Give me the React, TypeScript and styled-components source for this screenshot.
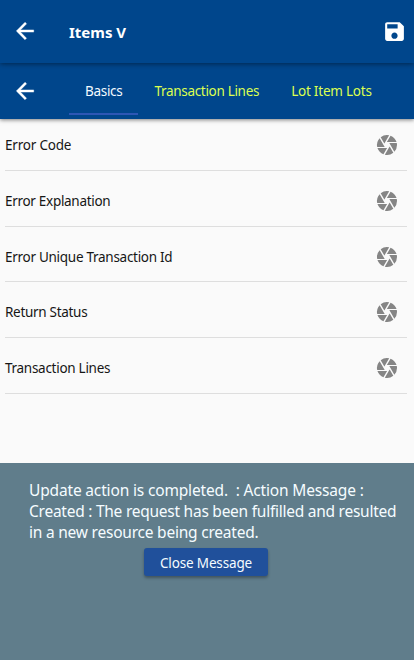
import React from 'react';
import styled, { createGlobalStyle } from 'styled-components';
import { IoMdArrowBack, IoMdSave } from 'react-icons/io';
import { MdCamera } from 'react-icons/md';

const GlobalStyle = createGlobalStyle`
  * { box-sizing: border-box; }
  body { margin: 0; background: #fafafa; font-family: "Noto Sans", sans-serif; }
`;

const Screen = styled.main`
  height: 660px;
  display: flex;
  flex-direction: column;
  overflow: hidden;
  background: #fafafa;
`;

const Header = styled.header`
  flex: none;
  height: 63px;
  display: flex;
  align-items: center;
  padding: 0 7px 1px 12px;
  background: #00468c;
  color: #fff;
  z-index: 2;
  box-shadow: 0 1px 5px rgba(0, 0, 0, 0.45);
`;

const IconButton = styled.button`
  display: flex;
  border: 0;
  padding: 0;
  background: none;
  color: inherit;
`;

const BackIcon = styled(IoMdArrowBack)`
  stroke: currentColor;
  stroke-width: 8px;
`;

const Title = styled.h1`
  flex: 1;
  margin: 2px 0 0 31px;
  font-size: 15px;
  font-weight: 700;
  line-height: 20px;
  letter-spacing: 0;
`;

const TabBar = styled.nav`
  flex: none;
  height: 56px;
  display: flex;
  align-items: center;
  padding-left: 12px;
  background: #00468c;
  color: #fff;
  z-index: 1;
  box-shadow: 0 1px 4px rgba(0, 0, 0, 0.5);
`;

const Tabs = styled.div`
  align-self: stretch;
  display: flex;
  margin-left: 31px;
`;

const Tab = styled.button<{ $active?: boolean; $spacing: number }>`
  height: 52px;
  border: 0;
  border-bottom: 2px solid ${(p) => (p.$active ? '#2d57b5' : 'transparent')};
  padding: 6px 16px 0;
  background: none;
  color: ${(p) => (p.$active ? '#f4faff' : '#dcff50')};
  font: 400 13.5px/20px "Noto Sans", sans-serif;
  letter-spacing: ${(p) => p.$spacing}px;
  white-space: nowrap;
`;

const Fields = styled.section`
  flex: 1;
  padding: 0 7px 0 5px;
`;

const FieldRow = styled.div`
  height: 55.7px;
  display: flex;
  align-items: center;
  justify-content: space-between;
  padding: 5px 8px 0 0;
  border-bottom: 1px solid #dedede;
  color: #858585;

  &:first-child { height: 52px; padding-top: 1px; }
`;

const FieldLabel = styled.span<{ $spacing: number }>`
  color: #161616;
  font-size: 13.5px;
  line-height: 20px;
  letter-spacing: ${(p) => p.$spacing}px;
`;

const MessagePanel = styled.section`
  flex: none;
  height: 197px;
  display: flex;
  flex-direction: column;
  align-items: center;
  padding-top: 17px;
  background: #607d8b;
  color: #f5fcff;
`;

const MessageText = styled.p`
  align-self: stretch;
  margin: 0 0 5px 29px;
  font-size: 15.5px;
  line-height: 21px;
  white-space: pre;
`;

const MessageLine = styled.span<{ $spacing: number }>`
  display: block;
  letter-spacing: ${(p) => p.$spacing}px;
`;

const CloseButton = styled.button`
  width: 124px;
  height: 28px;
  margin-right: 2px;
  border: 0;
  border-radius: 3px;
  padding: 2px 0 0;
  background: #20509b;
  color: #f5fcff;
  font: 400 13.5px/20px "Noto Sans", sans-serif;
  letter-spacing: -0.15px;
  white-space: nowrap;
  box-shadow: 0 2px 3px rgba(0, 0, 0, 0.32);
`;

const fields = [
  { label: 'Error Code', spacing: -0.2 },
  { label: 'Error Explanation', spacing: -0.3 },
  { label: 'Error Unique Transaction Id', spacing: -0.28 },
  { label: 'Return Status', spacing: -0.3 },
  { label: 'Transaction Lines', spacing: -0.28 },
];

export default function App() {
  return (
    <Screen>
      <GlobalStyle />
      <Header>
        <IconButton aria-label="Back"><BackIcon size={26} /></IconButton>
        <Title>Items V</Title>
        <IconButton aria-label="Save"><IoMdSave size={25} /></IconButton>
      </Header>
      <TabBar>
        <IconButton aria-label="Back"><BackIcon size={26} /></IconButton>
        <Tabs>
          <Tab $active $spacing={-0.3}>Basics</Tab>
          <Tab $spacing={-0.31}>Transaction Lines</Tab>
          <Tab $spacing={-0.22}>Lot Item Lots</Tab>
        </Tabs>
      </TabBar>
      <Fields>
        {fields.map((field) => (
          <FieldRow key={field.label}>
            <FieldLabel $spacing={field.spacing}>{field.label}</FieldLabel>
            <IconButton aria-label="Scan"><MdCamera size={24} /></IconButton>
          </FieldRow>
        ))}
      </Fields>
      <MessagePanel>
        <MessageText>
          <MessageLine $spacing={-0.16}>{'Update action is completed.  : Action Message :'}</MessageLine>
          <MessageLine $spacing={-0.25}>Created : The request has been fulfilled and resulted</MessageLine>
          <MessageLine $spacing={-0.22}>in a new resource being created.</MessageLine>
        </MessageText>
        <CloseButton>Close Message</CloseButton>
      </MessagePanel>
    </Screen>
  );
}
